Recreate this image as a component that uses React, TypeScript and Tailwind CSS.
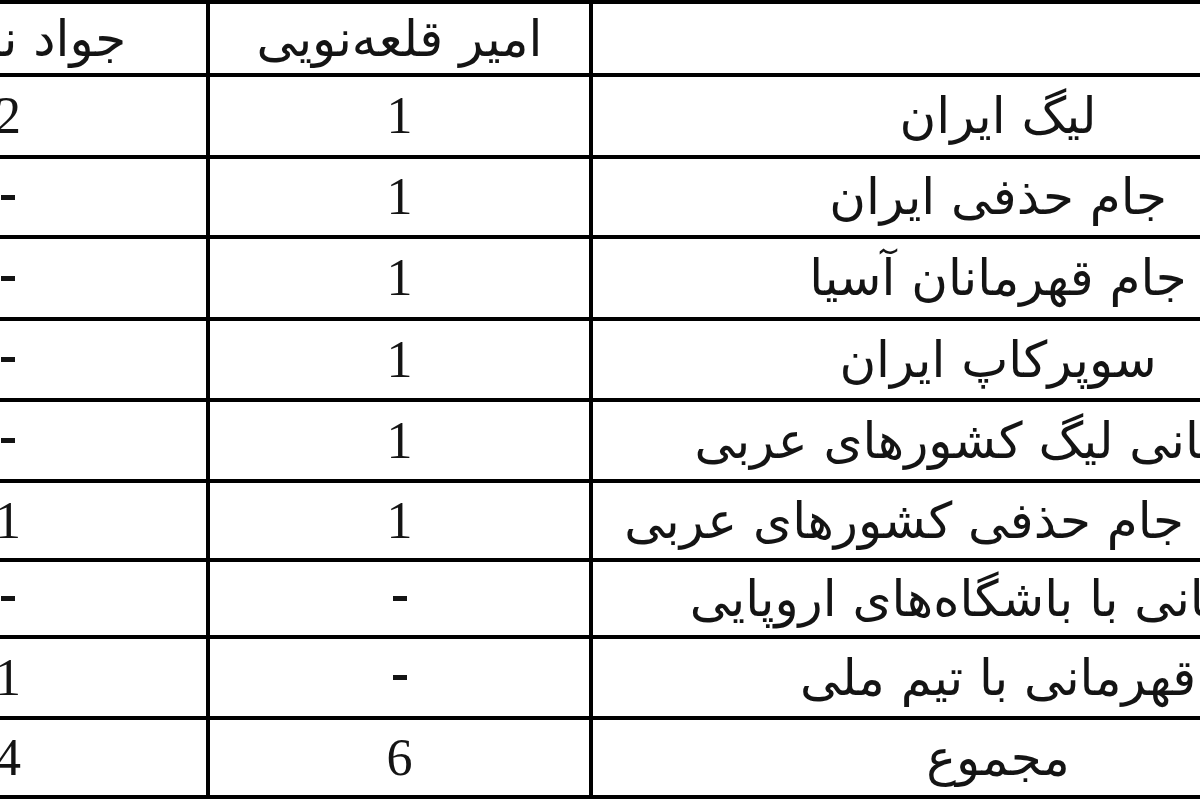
const HEADER = ["جواد نکونام", "امیر قلعه‌نویی", ""];

const ROWS: [string, string, string][] = [
  ["2", "1", "لیگ ایران"],
  ["-", "1", "جام حذفی ایران"],
  ["-", "1", "جام قهرمانان آسیا"],
  ["-", "1", "سوپرکاپ ایران"],
  ["-", "1", "قهرمانی لیگ کشورهای عربی"],
  ["1", "1", "قهرمانی جام حذفی کشورهای عربی"],
  ["-", "-", "قهرمانی با باشگاه‌های اروپایی"],
  ["1", "-", "قهرمانی با تیم ملی"],
  ["4", "6", "مجموع"],
];

function TextCell({ children }: { children: string }) {
  return (
    <div
      dir="rtl"
      className="flex items-center justify-center overflow-hidden whitespace-nowrap bg-white font-['DejaVu_Sans',sans-serif] text-[50px] leading-none text-[#141414]"
    >
      {children}
    </div>
  );
}

function NumCell({ children }: { children: string }) {
  return (
    <div className="flex items-center justify-center bg-white font-['Liberation_Serif',serif] text-[52px] leading-none text-[#141414]">
      {children === "-" ? (
        <span className="block h-[5px] w-[14px] bg-[#141414]" />
      ) : (
        children
      )}
    </div>
  );
}

export default function App() {
  return (
    <div className="h-[800px] w-[1200px] overflow-hidden bg-white">
      <div className="ml-[-194px] grid w-[1601px] grid-cols-[396px_379px_810px] grid-rows-[69px_78px_76px_78px_77px_77px_75px_73px_77px_75px] gap-[4px] border-4 border-black bg-black">
        {HEADER.map((h, i) => (
          <TextCell key={`h${i}`}>{h}</TextCell>
        ))}
        {ROWS.map((r, i) => (
          <div key={i} className="contents">
            <NumCell>{r[0]}</NumCell>
            <NumCell>{r[1]}</NumCell>
            <TextCell>{r[2]}</TextCell>
          </div>
        ))}
      </div>
    </div>
  );
}
